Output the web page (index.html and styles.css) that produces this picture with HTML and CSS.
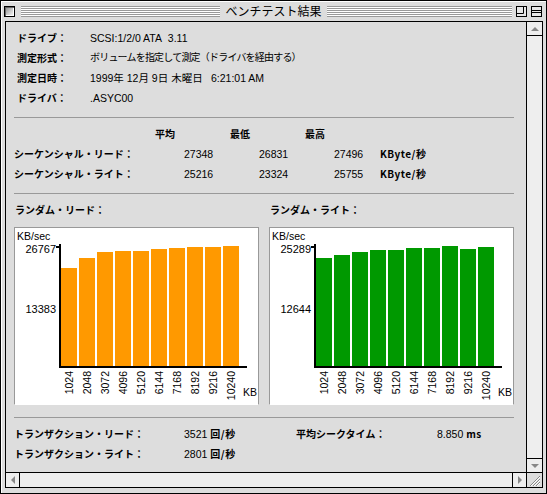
FILE: index.html
```html
<!DOCTYPE html>
<html lang="ja">

<head>
    <meta charset="UTF-8">
    <title>ベンチテスト結果</title>
    <link rel="stylesheet" href="styles.css">
</head>

<body>
    <div class="window">
        <div class="titlebar">
            <div class="tb-left">
                <span class="closebox"></span>
                <span class="stripes"></span>
            </div>
            <span class="title">ベンチテスト結果</span>
            <div class="tb-right">
                <span class="stripes"></span>
                <svg class="wbox" width="11" height="11" viewBox="0 0 11 11">
                    <rect x="0.5" y="0.5" width="10" height="10" fill="#e6e6e6" stroke="#000" />
                    <path d="M0.5 7.5H7.5V0.5" fill="none" stroke="#000" />
                </svg>
                <svg class="wbox" width="11" height="11" viewBox="0 0 11 11">
                    <rect x="0.5" y="0.5" width="10" height="10" fill="#e6e6e6" stroke="#000" />
                    <path d="M0.5 4.5H10.5M0.5 6.5H10.5" fill="none" stroke="#000" />
                </svg>
            </div>
        </div>

        <div class="framewrap">
            <div class="frame">
                <div class="frame-top">
                    <div class="pane">
                        <!-- ドライブ情報 -->
                        <div class="info">
                            <div class="row"><b class="lbl">ドライブ：</b><span class="val">SCSI:1/2/0 ATA&nbsp; 3.11</span></div>
                            <div class="row"><b class="lbl">測定形式：</b><span class="val jp">ボリュームを指定して測定（ドライバを経由する）</span></div>
                            <div class="row"><b class="lbl">測定日時：</b><span class="val"><span class="date">1999年 12月 9日 木曜日</span>6:21:01 AM</span></div>
                            <div class="row"><b class="lbl">ドライバ：</b><span class="val">.ASYC00</span></div>
                        </div>

                        <div class="rule"></div>

                        <!-- シーケンシャル -->
                        <div class="seq">
                            <div class="heads">
                                <b>平均</b><b>最低</b><b>最高</b>
                            </div>
                            <div class="grid">
                                <b class="lbl">シーケンシャル・リード：</b>
                                <span class="val">27348</span>
                                <span class="val">26831</span>
                                <span class="val">27496</span>
                                <b class="unit">KByte/秒</b>
                            </div>
                            <div class="grid">
                                <b class="lbl">シーケンシャル・ライト：</b>
                                <span class="val">25216</span>
                                <span class="val">23324</span>
                                <span class="val">25755</span>
                                <b class="unit">KByte/秒</b>
                            </div>
                        </div>

                        <div class="rule"></div>

                        <!-- ランダム -->
                        <div class="randoms">
                            <div class="rcol">
                                <b class="lbl rtitle">ランダム・リード：</b>
                                <div class="chartbox">
                                    <svg class="chart" width="243" height="176" viewBox="0 0 243 176">
                                        <text x="2" y="12">KB/sec</text>
                                        <text class="ynum" x="41" y="25" text-anchor="end">26767</text>
                                        <text class="ynum" x="41" y="85" text-anchor="end">13383</text>
                                        <rect x="41" y="18" width="3" height="2" fill="#000" />
                                        <g fill="#ff9900">
                                            <rect x="46" y="40" width="16" height="98" />
                                            <rect x="64" y="30" width="16" height="108" />
                                            <rect x="82" y="24" width="16" height="114" />
                                            <rect x="100" y="23" width="16" height="115" />
                                            <rect x="118" y="23" width="16" height="115" />
                                            <rect x="136" y="21" width="16" height="117" />
                                            <rect x="154" y="20" width="16" height="118" />
                                            <rect x="172" y="19" width="16" height="119" />
                                            <rect x="190" y="19" width="16" height="119" />
                                            <rect x="208" y="18" width="16" height="120" />
                                        </g>
                                        <rect x="44" y="16" width="2" height="124" fill="#000" />
                                        <rect x="44" y="138" width="188" height="2" fill="#000" />
                                        <g class="xnum" text-anchor="end">
                                            <text transform="translate(58 143) rotate(-90)">1024</text>
                                            <text transform="translate(76 143) rotate(-90)">2048</text>
                                            <text transform="translate(94 143) rotate(-90)">3072</text>
                                            <text transform="translate(112 143) rotate(-90)">4096</text>
                                            <text transform="translate(130 143) rotate(-90)">5120</text>
                                            <text transform="translate(148 143) rotate(-90)">6144</text>
                                            <text transform="translate(166 143) rotate(-90)">7168</text>
                                            <text transform="translate(184 143) rotate(-90)">8192</text>
                                            <text transform="translate(202 143) rotate(-90)">9216</text>
                                            <text transform="translate(220 143) rotate(-90)">10240</text>
                                        </g>
                                        <text x="228" y="168">KB</text>
                                    </svg>
                                </div>
                            </div>
                            <div class="rcol">
                                <b class="lbl rtitle">ランダム・ライト：</b>
                                <div class="chartbox">
                                    <svg class="chart" width="243" height="176" viewBox="0 0 243 176">
                                        <text x="2" y="12">KB/sec</text>
                                        <text class="ynum" x="41" y="25" text-anchor="end">25289</text>
                                        <text class="ynum" x="41" y="85" text-anchor="end">12644</text>
                                        <rect x="41" y="18" width="3" height="2" fill="#000" />
                                        <g fill="#009900">
                                            <rect x="46" y="30" width="16" height="108" />
                                            <rect x="64" y="27" width="16" height="111" />
                                            <rect x="82" y="24" width="16" height="114" />
                                            <rect x="100" y="22" width="16" height="116" />
                                            <rect x="118" y="22" width="16" height="116" />
                                            <rect x="136" y="20" width="16" height="118" />
                                            <rect x="154" y="20" width="16" height="118" />
                                            <rect x="172" y="18" width="16" height="120" />
                                            <rect x="190" y="21" width="16" height="117" />
                                            <rect x="208" y="19" width="16" height="119" />
                                        </g>
                                        <rect x="44" y="16" width="2" height="124" fill="#000" />
                                        <rect x="44" y="138" width="188" height="2" fill="#000" />
                                        <g class="xnum" text-anchor="end">
                                            <text transform="translate(58 143) rotate(-90)">1024</text>
                                            <text transform="translate(76 143) rotate(-90)">2048</text>
                                            <text transform="translate(94 143) rotate(-90)">3072</text>
                                            <text transform="translate(112 143) rotate(-90)">4096</text>
                                            <text transform="translate(130 143) rotate(-90)">5120</text>
                                            <text transform="translate(148 143) rotate(-90)">6144</text>
                                            <text transform="translate(166 143) rotate(-90)">7168</text>
                                            <text transform="translate(184 143) rotate(-90)">8192</text>
                                            <text transform="translate(202 143) rotate(-90)">9216</text>
                                            <text transform="translate(220 143) rotate(-90)">10240</text>
                                        </g>
                                        <text x="228" y="168">KB</text>
                                    </svg>
                                </div>
                            </div>
                        </div>

                        <div class="rule rule-low"></div>

                        <!-- トランザクション -->
                        <div class="trans">
                            <div class="trow">
                                <b class="lbl">トランザクション・リード：</b>
                                <span class="val">3521 <b class="unit">回/秒</b></span>
                                <b class="lbl">平均シークタイム：</b>
                                <span class="val">8.850 <b class="unit">ms</b></span>
                            </div>
                            <div class="trow">
                                <b class="lbl">トランザクション・ライト：</b>
                                <span class="val">2801 <b class="unit">回/秒</b></span>
                            </div>
                        </div>
                    </div>

                    <div class="vscroll">
                        <div class="arrowbox"><span class="tri tri-up"></span></div>
                        <div class="track"></div>
                        <div class="arrowbox arrowbox-down"><span class="tri tri-down"></span></div>
                    </div>
                </div>

                <div class="frame-bottom">
                    <div class="hscroll">
                        <div class="harrow"><span class="tri tri-left"></span></div>
                        <div class="track"></div>
                        <div class="harrow harrow-right"><span class="tri tri-right"></span></div>
                    </div>
                    <div class="grow">
                        <svg width="15" height="14" viewBox="0 0 15 14">
                            <path d="M4 13L13 4M7 13L13 7M10 13L13 10" stroke="#fff" stroke-width="1" />
                            <path d="M3 13L13 3M6 13L13 6M9 13L13 9" stroke="#888" stroke-width="1" />
                        </svg>
                    </div>
                </div>
            </div>
        </div>
    </div>
</body>

</html>
```

FILE: styles.css
```css
html,
body {
    margin: 0;
    padding: 0;
    background: #dddddd;
}

.window {
    width: 547px;
    height: 494px;
    box-sizing: border-box;
    border: 1px solid #000;
    background: #dddddd;
    box-shadow: inset 1px 1px 0 #fff;
    font-family: "Liberation Sans", "Noto Sans CJK JP", sans-serif;
    color: #000;
}

/* タイトルバー */
.titlebar {
    height: 20px;
    display: grid;
    grid-template-columns: 1fr auto 1fr;
    align-items: center;
}

.tb-left,
.tb-right {
    display: flex;
    align-items: center;
}

.tb-left {
    padding-left: 3px;
}

.tb-right {
    padding-right: 4px;
}

.closebox {
    width: 9px;
    height: 9px;
    border: 1px solid #000;
    background: linear-gradient(135deg, #888 0%, #ccc 55%, #fff 100%);
    box-shadow: inset 1px 1px 0 #666, inset -1px -1px 0 #fff;
}

.stripes {
    flex: 1;
    height: 11px;
    background: repeating-linear-gradient(to bottom, #999 0 1px, #fff 1px 2px);
}

.tb-left .stripes {
    margin: 0 5px 0 6px;
}

.tb-right .stripes {
    margin: 0 4px 0 5px;
}

.wbox {
    display: block;
}

.wbox + .wbox {
    margin-left: 4px;
}

.title {
    font-family: "Noto Sans CJK JP", sans-serif;
    font-size: 12px;
    line-height: 20px;
}

/* 枠 */
.framewrap {
    padding: 0 3px 5px 4px;
}

.frame {
    height: 467px;
    box-sizing: border-box;
    border: 1px solid #000;
    display: flex;
    flex-direction: column;
}

.frame-top {
    height: 450px;
    display: flex;
}

.frame-bottom {
    flex: 1;
    display: flex;
    border-top: 1px solid #000;
}

.pane {
    flex: 1;
    padding: 6px 12px 0 8px;
    background: #dddddd;
    font-size: 10px;
}

.lbl,
.unit,
.heads b {
    font-family: "Noto Sans CJK JP", sans-serif;
    font-weight: 700;
    font-size: 10px;
}

.val {
    font-family: "Liberation Sans", "Noto Sans CJK JP", sans-serif;
    font-size: 10.5px;
}

.info {
    padding-left: 3px;
}

.info .row {
    display: grid;
    grid-template-columns: 73px 1fr;
    height: 20px;
    line-height: 20px;
}

.jp {
    letter-spacing: -0.8px;
    font-size: 10px;
}

.date {
    display: inline-block;
    width: 121px;
}

.rule {
    height: 0;
    border-top: 1px solid #999;
    margin: 9px 0 6px;
}

.rule-low {
    margin-top: 12px;
}

.heads {
    display: flex;
    height: 20px;
    line-height: 20px;
    padding-left: 141px;
}

.heads b {
    width: 75px;
}

.seq .grid {
    display: grid;
    grid-template-columns: 170px 75px 75px 46px 1fr;
    height: 20px;
    line-height: 20px;
}

.unit {
    letter-spacing: 0.5px;
}

.randoms {
    display: grid;
    grid-template-columns: 245px 245px;
    column-gap: 10px;
}

.rtitle {
    display: block;
    height: 20px;
    line-height: 20px;
    padding-left: 1px;
}

.chartbox {
    margin-top: 7px;
    height: 178px;
    box-sizing: border-box;
    background: #fff;
    border: 1px solid #999;
    border-bottom-color: #fff;
}

.chart {
    display: block;
}

.chart text {
    font-family: "Liberation Sans", sans-serif;
    font-size: 10.5px;
    fill: #000;
}

.chart .ynum {
    font-size: 11px;
}

.chart .xnum text {
    font-size: 10.5px;
}

.trow {
    display: grid;
    grid-template-columns: 170px 112px 141px 1fr;
    height: 20px;
    line-height: 20px;
}

/* スクロールバー */
.vscroll {
    width: 15px;
    border-left: 1px solid #000;
    background: #eeeeee;
    display: flex;
    flex-direction: column;
}

.vscroll .track,
.hscroll .track {
    flex: 1;
}

.arrowbox {
    height: 13px;
    border-bottom: 1px solid #000;
    display: flex;
    align-items: center;
    justify-content: center;
}

.arrowbox-down {
    border-bottom: none;
    border-top: 1px solid #000;
}

.hscroll {
    flex: 1;
    display: flex;
    background: #eeeeee;
}

.harrow {
    width: 13px;
    border-right: 1px solid #000;
    display: flex;
    align-items: center;
    justify-content: center;
}

.harrow-right {
    border-right: none;
    border-left: 1px solid #000;
}

.tri {
    width: 0;
    height: 0;
}

.tri-up {
    border-left: 4px solid transparent;
    border-right: 4px solid transparent;
    border-bottom: 4px solid #888;
}

.tri-down {
    border-left: 4px solid transparent;
    border-right: 4px solid transparent;
    border-top: 4px solid #888;
}

.tri-left {
    border-top: 4px solid transparent;
    border-bottom: 4px solid transparent;
    border-right: 4px solid #888;
}

.tri-right {
    border-top: 4px solid transparent;
    border-bottom: 4px solid transparent;
    border-left: 4px solid #888;
}

.grow {
    width: 15px;
    border-left: 1px solid #000;
    background: #dddddd;
}

.grow svg {
    display: block;
}
```
